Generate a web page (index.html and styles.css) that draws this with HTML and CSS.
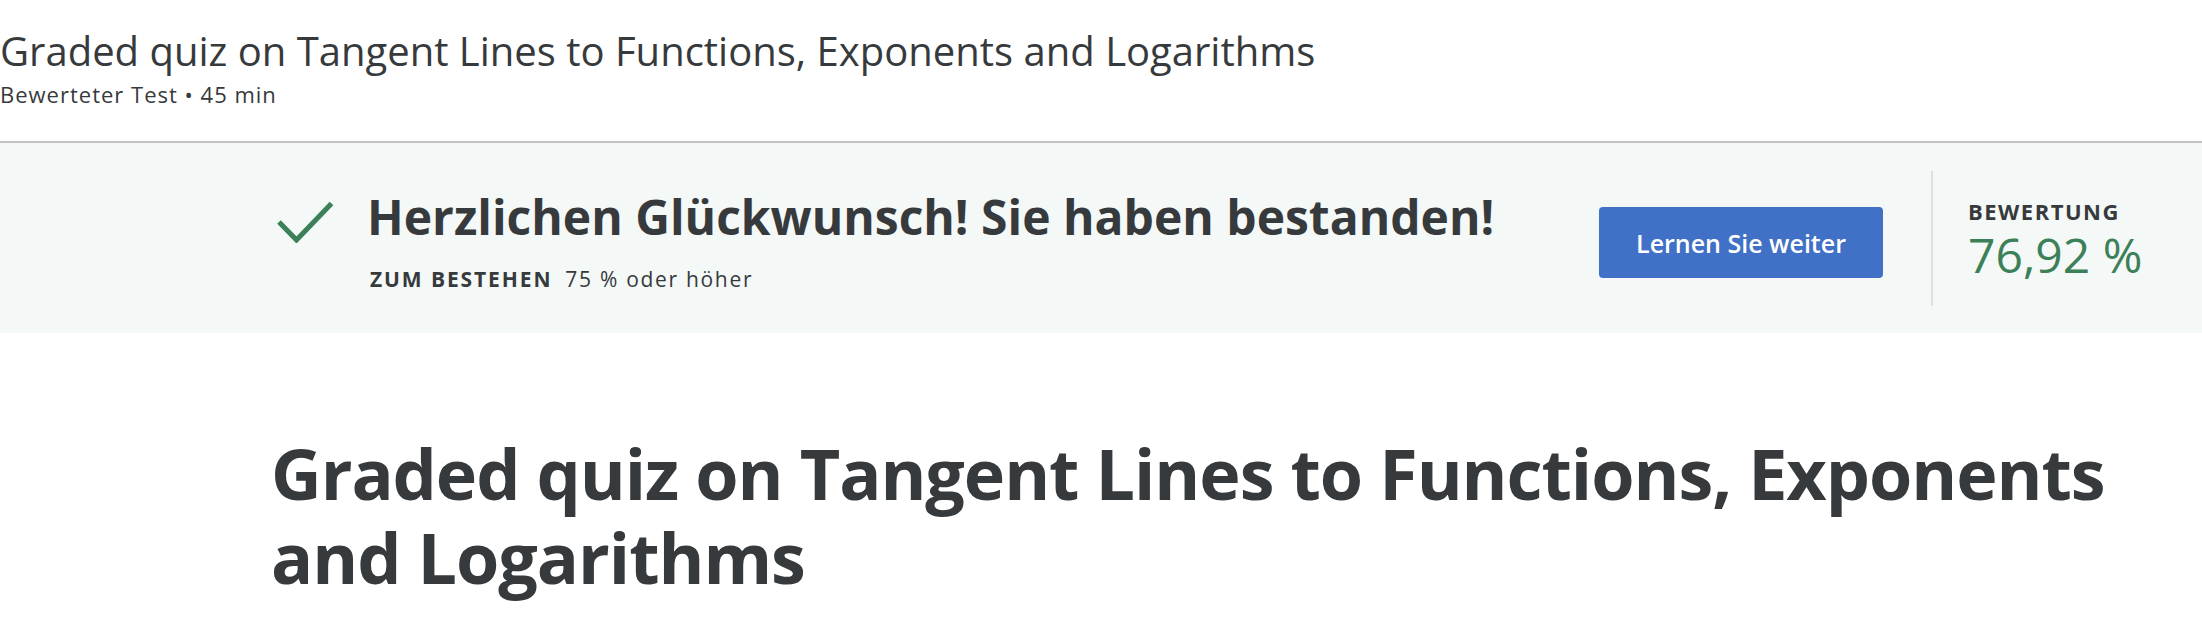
FILE: index.html
```html
<!DOCTYPE html>
<html lang="de">
<head>
<meta charset="utf-8">
<title>Graded quiz</title>
<link rel="stylesheet" href="styles.css">
</head>
<body>
<header class="page-header">
  <h1 class="page-title">Graded quiz on Tangent Lines to Functions, Exponents and Logarithms</h1>
  <div class="page-meta">Bewerteter Test • 45 min</div>
</header>
<section class="banner">
  <div class="result">
    <svg class="check" width="57" height="42" viewBox="0 0 57 42" aria-hidden="true">
      <polyline points="2,21 19.5,39 54.5,2.5" fill="none" stroke="#3b8058" stroke-width="5"/>
    </svg>
    <div class="result-text">
      <div class="result-title">Herzlichen Glückwunsch! Sie haben bestanden!</div>
      <div class="result-sub"><span class="label">ZUM BESTEHEN</span><span class="req">75 % oder höher</span></div>
    </div>
  </div>
  <button class="btn-primary">Lernen Sie weiter</button>
  <div class="score">
    <div class="score-label">BEWERTUNG</div>
    <div class="score-value">76,92 %</div>
  </div>
</section>
<main class="content">
  <h2 class="quiz-title">Graded quiz on Tangent Lines to Functions, Exponents and Logarithms</h2>
</main>
</body>
</html>
```
FILE: styles.css
```css
html, body {
  margin: 0;
  padding: 0;
  background: #ffffff;
}
body {
  font-family: "Open Sans", "Noto Sans", sans-serif;
  color: #373a3c;
  width: 2202px;
  height: 618px;
  overflow: hidden;
}
.page-header {
  padding: 26px 0 33px 0;
  border-bottom: 2px solid #c2c2c2;
}
.page-title {
  margin: 0;
  font-size: 40px;
  font-weight: 400;
  line-height: 50px;
  white-space: nowrap;
}
.page-meta {
  margin-top: 4px;
  font-size: 22px;
  letter-spacing: 1px;
  line-height: 28px;
}
.banner {
  display: flex;
  align-items: center;
  height: 190px;
  background: #f4f8f6;
  padding: 0 62px 0 277px;
}
.result {
  display: flex;
  align-items: flex-start;
  gap: 33px;
  margin-top: 4px;
}
.check {
  display: block;
  margin-top: 14px;
  flex: none;
}
.result-title {
  font-size: 48px;
  font-weight: 700;
  line-height: 60px;
  white-space: nowrap;
}
.result-sub {
  margin-top: 18px;
  margin-left: 3px;
  font-size: 21px;
  line-height: 28px;
  display: flex;
  gap: 13px;
}
.label {
  font-weight: 700;
  letter-spacing: 1.9px;
}
.req {
  letter-spacing: 1.7px;
}
.btn-primary {
  margin-left: auto;
  margin-right: 48px;
  margin-top: 9px;
  width: 284px;
  height: 71px;
  flex: none;
  border: 0;
  border-radius: 4px;
  background: #4071c6;
  color: #ffffff;
  font-family: "Open Sans", "Noto Sans", sans-serif;
  font-size: 25px;
  font-weight: 600;
  padding: 0;
}
.score {
  box-sizing: border-box;
  flex: none;
  width: 209px;
  height: 135px;
  border-left: 2px solid #dedfdf;
  padding: 26px 0 0 35px;
  white-space: nowrap;
}
.score-label {
  font-size: 22px;
  font-weight: 700;
  letter-spacing: 1.5px;
  line-height: 28px;
}
.score-value {
  margin-top: 2px;
  font-size: 48px;
  line-height: 56px;
  color: #3b8058;
}
.content {
  padding: 98px 0 0 271px;
}
.quiz-title {
  margin: 0;
  max-width: 1900px;
  font-size: 70px;
  letter-spacing: -1.05px;
  font-weight: 700;
  line-height: 84px;
}
```
